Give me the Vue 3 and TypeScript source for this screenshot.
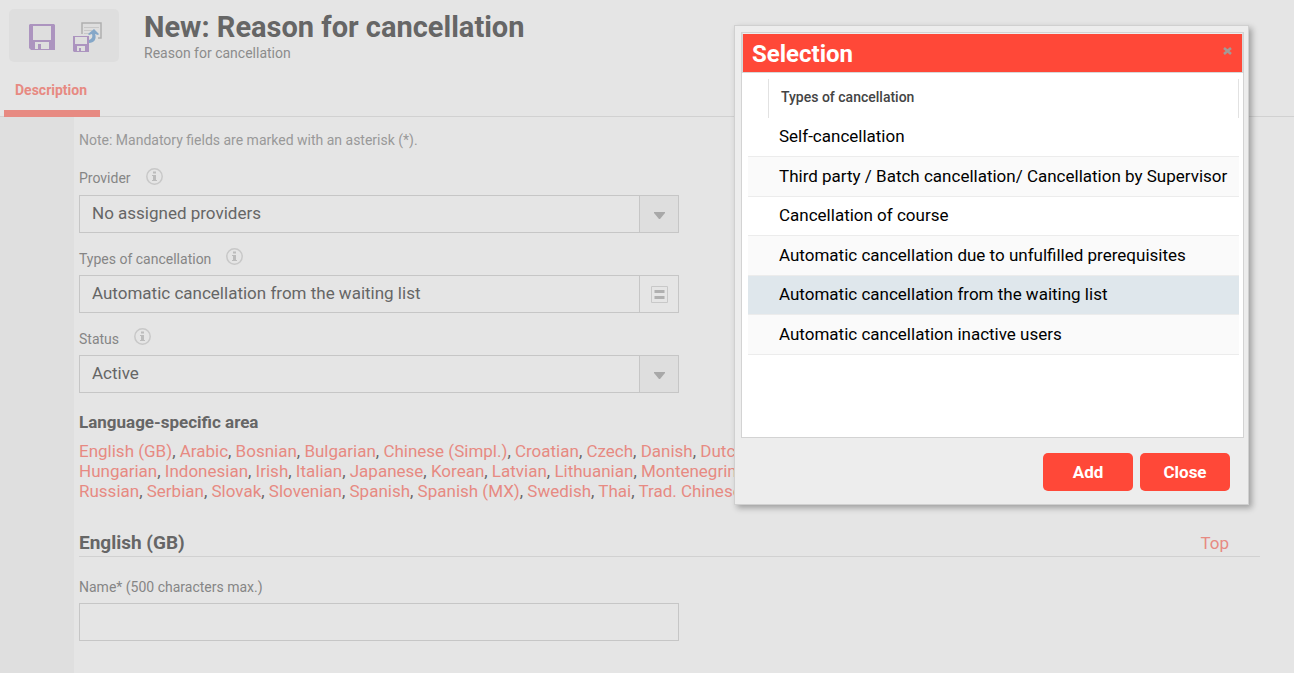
<script setup lang="ts">
import { ref } from 'vue'

const provider = ref('No assigned providers')
const status = ref('Active')
const name = ref('')
const types = [
  'Self-cancellation',
  'Third party / Batch cancellation/ Cancellation by Supervisor',
  'Cancellation of course',
  'Automatic cancellation due to unfulfilled prerequisites',
  'Automatic cancellation from the waiting list',
  'Automatic cancellation inactive users',
]
const selected = ref(types[4])
const languageRows = [
  ['English (GB)', 'Arabic', 'Bosnian', 'Bulgarian', 'Chinese (Simpl.)', 'Croatian', 'Czech', 'Danish', 'Dutch'],
  ['Hungarian', 'Indonesian', 'Irish', 'Italian', 'Japanese', 'Korean', 'Latvian', 'Lithuanian', 'Montenegrin'],
  ['Russian', 'Serbian', 'Slovak', 'Slovenian', 'Spanish', 'Spanish (MX)', 'Swedish', 'Thai', 'Trad. Chinese'],
]
</script>

<template>
  <div class="page">
    <header class="header">
      <div class="toolbar">
        <button type="button" class="tool" aria-label="Save">
          <svg width="26" height="26" viewBox="0 0 26 26">
            <path fill="#ac94bf" fill-rule="evenodd" d="M1 0H25L26 1V26H2L0 24V1ZM4 2V16H22V2ZM6 18V25H9V20H12V25H20V18Z" />
          </svg>
        </button>
        <button type="button" class="tool" aria-label="Save and close">
          <svg width="30" height="30" viewBox="0 0 30 30">
            <path fill="none" stroke="#b0b0b0" stroke-width="1.500" d="M9 12V1H28V16H25" />
            <path stroke="#c8c8c8" d="M11 5.500H26M11 8.500H19M11 11.500H17" />
            <path fill="#ac94bf" fill-rule="evenodd" d="M0 14H16V30H1L0 29ZM2 15V22H14V15ZM4 24V29H6V26H8V29H12V24Z" />
            <path fill="#85a7c8" d="M21 7L26 12L25 13L22 12C24 17 21 21 16 21V18C19 17 20 15 19 12L16 13L15 12Z" />
          </svg>
        </button>
      </div>
      <div class="titles">
        <h1>New: Reason for cancellation</h1>
        <p>Reason for cancellation</p>
      </div>
    </header>
    <nav class="tabs"><a href="#description" class="tab">Description</a></nav>

    <div class="body">
      <aside class="side"></aside>
      <main id="description" class="content">
        <p class="note">Note: Mandatory fields are marked with an asterisk (*).</p>

        <div class="group">
          <div class="label-row">
            <label for="provider">Provider</label>
            <svg class="info" width="17" height="17" viewBox="0 0 17 17"><circle cx="8.500" cy="8.500" r="7.700" /><path d="M7 3.500h3v2H7zM6 7h4v5h1v1H6v-1h1V8H6z" /></svg>
          </div>
          <div class="field">
            <select id="provider" v-model="provider"><option>No assigned providers</option></select>
            <span class="arrow"><svg width="11" height="7" viewBox="0 0 11 7"><path d="M0 0H11V1L6 7H5L0 1Z" /></svg></span>
          </div>
        </div>
        <div class="group">
          <div class="label-row">
            <label for="types">Types of cancellation</label>
            <svg class="info" width="17" height="17" viewBox="0 0 17 17"><circle cx="8.500" cy="8.500" r="7.700" /><path d="M7 3.500h3v2H7zM6 7h4v5h1v1H6v-1h1V8H6z" /></svg>
          </div>
          <div class="field">
            <input id="types" type="text" readonly :value="selected" />
            <button type="button" class="picker" aria-label="Select types of cancellation">
              <svg width="17" height="17" viewBox="0 0 17 17"><path fill="none" stroke="#c8c8c8" d="M.5.5h16v16H.5z" /><path fill="#b0b0b0" d="M3.500 4h10v3h-10zM3.500 10h10v3h-10z" /></svg>
            </button>
          </div>
        </div>
        <div class="group">
          <div class="label-row">
            <label for="status">Status</label>
            <svg class="info" width="17" height="17" viewBox="0 0 17 17"><circle cx="8.500" cy="8.500" r="7.700" /><path d="M7 3.500h3v2H7zM6 7h4v5h1v1H6v-1h1V8H6z" /></svg>
          </div>
          <div class="field">
            <select id="status" v-model="status"><option>Active</option></select>
            <span class="arrow"><svg width="11" height="7" viewBox="0 0 11 7"><path d="M0 0H11V1L6 7H5L0 1Z" /></svg></span>
          </div>
        </div>

        <h2 class="area">Language-specific area</h2>
        <div class="languages">
          <div v-for="(row, i) in languageRows" :key="i"><template v-for="lang in row" :key="lang"><a href="#english">{{ lang }}</a>, </template></div>
        </div>

        <div id="english" class="section-head">
          <h2>English (GB)</h2>
          <a href="#description">Top</a>
        </div>
        <div class="name-group">
          <label for="name">Name* (500 characters max.)</label>
          <div class="field"><input id="name" v-model="name" type="text" /></div>
        </div>
      </main>
    </div>

    <section class="dialog" role="dialog" aria-labelledby="dialog-title">
      <div class="panel">
        <div class="dialog-bar">
          <h2 id="dialog-title">Selection</h2>
          <button type="button" class="dismiss" aria-label="Close dialog">
            <svg width="9" height="8" viewBox="0 0 9 8"><path d="M1 1L8 7M8 1L1 7" stroke="#a39a97" stroke-width="2.600" /></svg>
          </button>
        </div>
        <table>
          <thead>
            <tr><th class="gutter"></th><th scope="col" class="heading">Types of cancellation</th></tr>
          </thead>
          <tbody>
            <tr v-for="type in types" :key="type" :class="{ selected: type === selected }" @click="selected = type">
              <td class="gutter"></td><td>{{ type }}</td>
            </tr>
          </tbody>
        </table>
      </div>
      <div class="actions">
        <button type="button">Add</button>
        <button type="button">Close</button>
      </div>
    </section>
  </div>
</template>

<style>
body { margin: 0; background: #e5e5e5; }
</style>

<style scoped>
* { box-sizing: border-box; }
.page {
  position: relative;
  display: flex;
  flex-direction: column;
  min-height: 100vh;
  font-family: Roboto, "Liberation Sans", sans-serif;
  font-size: 17px;
  color: #666;
  background: #e5e5e5;
}
h1, h2, p { margin: 0; }
a { color: #e78a82; text-decoration: none; }
button { padding: 0; border: 0; background: none; font: inherit; cursor: pointer; }
svg { display: block; }

.header { display: flex; gap: 25px; padding: 9px 9px 0; height: 72px; }
.toolbar {
  display: flex;
  align-items: center;
  gap: 18px;
  width: 110px;
  height: 53px;
  padding: 0 17px 0 20px;
  border-radius: 5px;
  background: #dedede;
}
.tool { display: flex; padding-top: 2px; }
.titles h1 { font-size: 29px; line-height: 36px; font-weight: 700; }
.titles p { font-size: 14px; line-height: 16px; color: #8c8c8c; }

.tabs { height: 45px; padding-left: 4px; border-bottom: 1px solid #d1d1d1; }
.tab {
  display: inline-block;
  width: 96px;
  height: 45px;
  padding-left: 11px;
  border-bottom: 7px solid #e78a82;
  font-size: 14px;
  line-height: 36px;
  font-weight: 700;
}

.body { display: flex; flex: 1; }
.side { width: 74px; background: #dfdfdf; }
.content { flex: 1; padding: 0 34px 32px 5px; }
.note { padding-top: 13px; font-size: 14px; line-height: 20px; color: #999; }
.group { margin-bottom: 2px; }
.label-row { display: flex; gap: 15px; height: 40px; padding-top: 13px; }
.label-row label { padding-top: 1px; }
.note + .group .label-row { height: 45px; padding-top: 18px; }
.note + .group .label-row label { padding-top: 0; }
label { font-size: 14px; line-height: 20px; color: #858585; }
.info circle { fill: none; stroke: #c8c8c8; stroke-width: 1.5; }
.info path { fill: #bcbcbc; }
.field {
  position: relative;
  display: flex;
  width: 600px;
  height: 38px;
  border: 1px solid #c6c6c6;
}
.field input, .field select {
  flex: 1;
  min-width: 0;
  padding: 0 12px 2px;
  border: 0;
  outline: 0;
  border-radius: 0;
  background: transparent;
  font: inherit;
  color: #666;
  appearance: none;
}
.arrow, .picker {
  display: flex;
  align-items: center;
  justify-content: center;
  width: 39px;
  border-left: 1px solid #c6c6c6;
}
.arrow { padding-top: 2px; background: #dedede; pointer-events: none; }
.arrow path { fill: #a8a8a8; }

.area { margin-top: 17px; font-size: 17px; line-height: 24px; }
.languages { margin-top: 7px; line-height: 20px; white-space: nowrap; }
.section-head {
  display: flex;
  align-items: center;
  justify-content: space-between;
  height: 28px;
  margin-top: 28px;
  padding-right: 31px;
  border-bottom: 1px solid #d1d1d1;
}
.section-head h2 { font-size: 19px; line-height: 26px; }
.name-group { padding-top: 20px; }
.name-group label { display: block; height: 26px; }

.dialog {
  position: absolute;
  top: 25px;
  right: 45px;
  width: 515px;
  padding: 6px 4px 13px 6px;
  border: 1px solid #d0d0d0;
  background: #ededed;
  box-shadow: 3px 3px 6px rgba(0, 0, 0, 0.3);
}
.panel { min-height: 406px; border: 1px solid #d3d3d3; background: #fff; }
.dialog-bar {
  display: flex;
  justify-content: space-between;
  height: 40px;
  border: 1px solid #d8d8d8;
  border-top-color: #eee;
  background: #ff4838;
}
.dialog-bar h2 { padding-left: 9px; font-size: 24px; line-height: 40px; color: #fff; }
.dismiss { display: flex; height: 21px; padding: 13px 10px 0 0; }
table {
  width: calc(100% - 10px);
  margin: 6px 4px 0 6px;
  border-spacing: 0;
  color: #000;
}
th, td { height: 39px; padding: 0 0 2px; text-align: left; }
.gutter { width: 20px; }
th.heading {
  padding: 0 0 3px 12px;
  border: 1px solid #e2e2e2;
  border-width: 0 1px;
  font-size: 14px;
  font-weight: 500;
  color: #444;
}
td { padding-left: 11px; border-bottom: 1px solid #ececec; white-space: nowrap; }
td.gutter { padding: 0; }
tbody tr:nth-child(even) td { height: 40px; background: #fafafa; }
tbody tr.selected td { background: #dfe7ec; }
.actions { display: flex; justify-content: flex-end; gap: 7px; padding: 15px 14px 0 0; }
.actions button {
  width: 90px;
  height: 38px;
  border-radius: 5px;
  background: #ff4838;
  color: #fff;
  font-weight: 700;
}
</style>
